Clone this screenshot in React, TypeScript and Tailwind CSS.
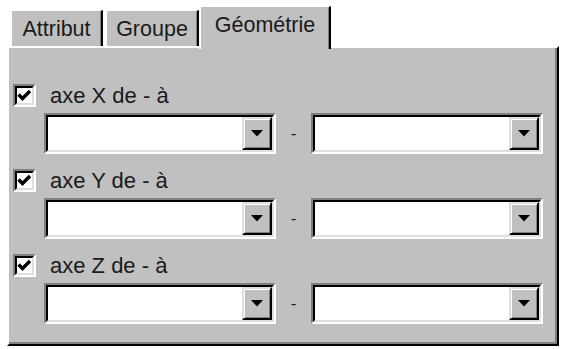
import React from "react";

type TabProps = {
  label: string;
  active?: boolean;
  className?: string;
};

function Tab({ label, active, className }: TabProps) {
  if (active) {
    return (
      <div
        className={[
          "relative z-10 -mb-[3px] flex h-[44px] justify-center rounded-tl-[3px] rounded-tr-[3px] border-t-2 border-l-2 border-r-2 border-t-white border-l-white border-r-black bg-[#c0c0c0] pt-[6px] leading-[24px] shadow-[inset_-1px_0_0_#808080]",
          className ?? "",
        ].join(" ")}
      >
        {label}
      </div>
    );
  }

  return (
    <div
      className={[
        "mt-[4px] flex h-[37px] items-center justify-center rounded-tl-[3px] rounded-tr-[3px] border-t-2 border-l-2 border-r-2 border-t-white border-l-white border-r-black bg-[#c0c0c0] leading-[24px] shadow-[inset_-1px_0_0_#808080]",
        className ?? "",
      ].join(" ")}
    >
      {label}
    </div>
  );
}

function Checkbox() {
  return (
    <div className="h-[23px] w-[23px] border-2 border-t-[#808080] border-l-[#808080] border-r-white border-b-white">
      <div className="flex h-full w-full items-center justify-center border-2 border-t-black border-l-black border-r-[#dfdfdf] border-b-[#dfdfdf] bg-white">
        <svg width="15" height="15" viewBox="0 0 15 15">
          <polyline
            points="1.5,6.5 5.5,10.5 13,3"
            fill="none"
            stroke="#000"
            strokeWidth="3.4"
          />
        </svg>
      </div>
    </div>
  );
}

function Dropdown() {
  return (
    <div className="flex h-[41px] w-[232px] border-2 border-t-[#808080] border-l-[#808080] border-r-white border-b-white">
      <div className="flex flex-1 justify-end border-2 border-t-black border-l-black border-r-[#dfdfdf] border-b-[#dfdfdf] bg-white">
        <div className="flex h-full w-[30px] items-center justify-center border-2 border-t-[#dfdfdf] border-l-[#dfdfdf] border-r-black border-b-black bg-[#c0c0c0] shadow-[inset_1px_1px_0_#fff,inset_-1px_-1px_0_#808080]">
          <svg width="12" height="7" viewBox="0 0 12 7">
            <polygon points="0,0 12,0 6,6.5" fill="#000" />
          </svg>
        </div>
      </div>
    </div>
  );
}

function AxisRow({ axis, first }: { axis: string; first?: boolean }) {
  return (
    <div className={first ? "" : "mt-[15px]"}>
      <div className="flex h-[23px] items-center">
        <Checkbox />
        <span className="ml-[14px] whitespace-pre">{`axe ${axis} de - à`}</span>
      </div>
      <div className="mt-[6px] flex items-center pl-[31px]">
        <Dropdown />
        <span className="w-[35px] text-center text-[17px]">-</span>
        <Dropdown />
      </div>
    </div>
  );
}

export default function App() {
  return (
    <div className="h-[349px] w-[565px] bg-white font-['Liberation_Sans',Arial,sans-serif] text-[21.5px] text-[#1a1a1a]">
      <div className="flex items-start pl-[10px] pt-[5px]">
        <Tab label="Attribut" className="w-[93px]" />
        <Tab label="Groupe" className="ml-[2px] w-[94px]" />
        <Tab label="Géométrie" active className="w-[132px]" />
      </div>
      <div className="ml-[7px] h-[300px] w-[552px] border-2 border-t-white border-l-white border-r-black border-b-black bg-[#c0c0c0] pl-[4px] pt-[36px] text-[22px] shadow-[inset_-2px_-2px_0_#808080]">
        <AxisRow axis="X" first />
        <AxisRow axis="Y" />
        <AxisRow axis="Z" />
      </div>
    </div>
  );
}
